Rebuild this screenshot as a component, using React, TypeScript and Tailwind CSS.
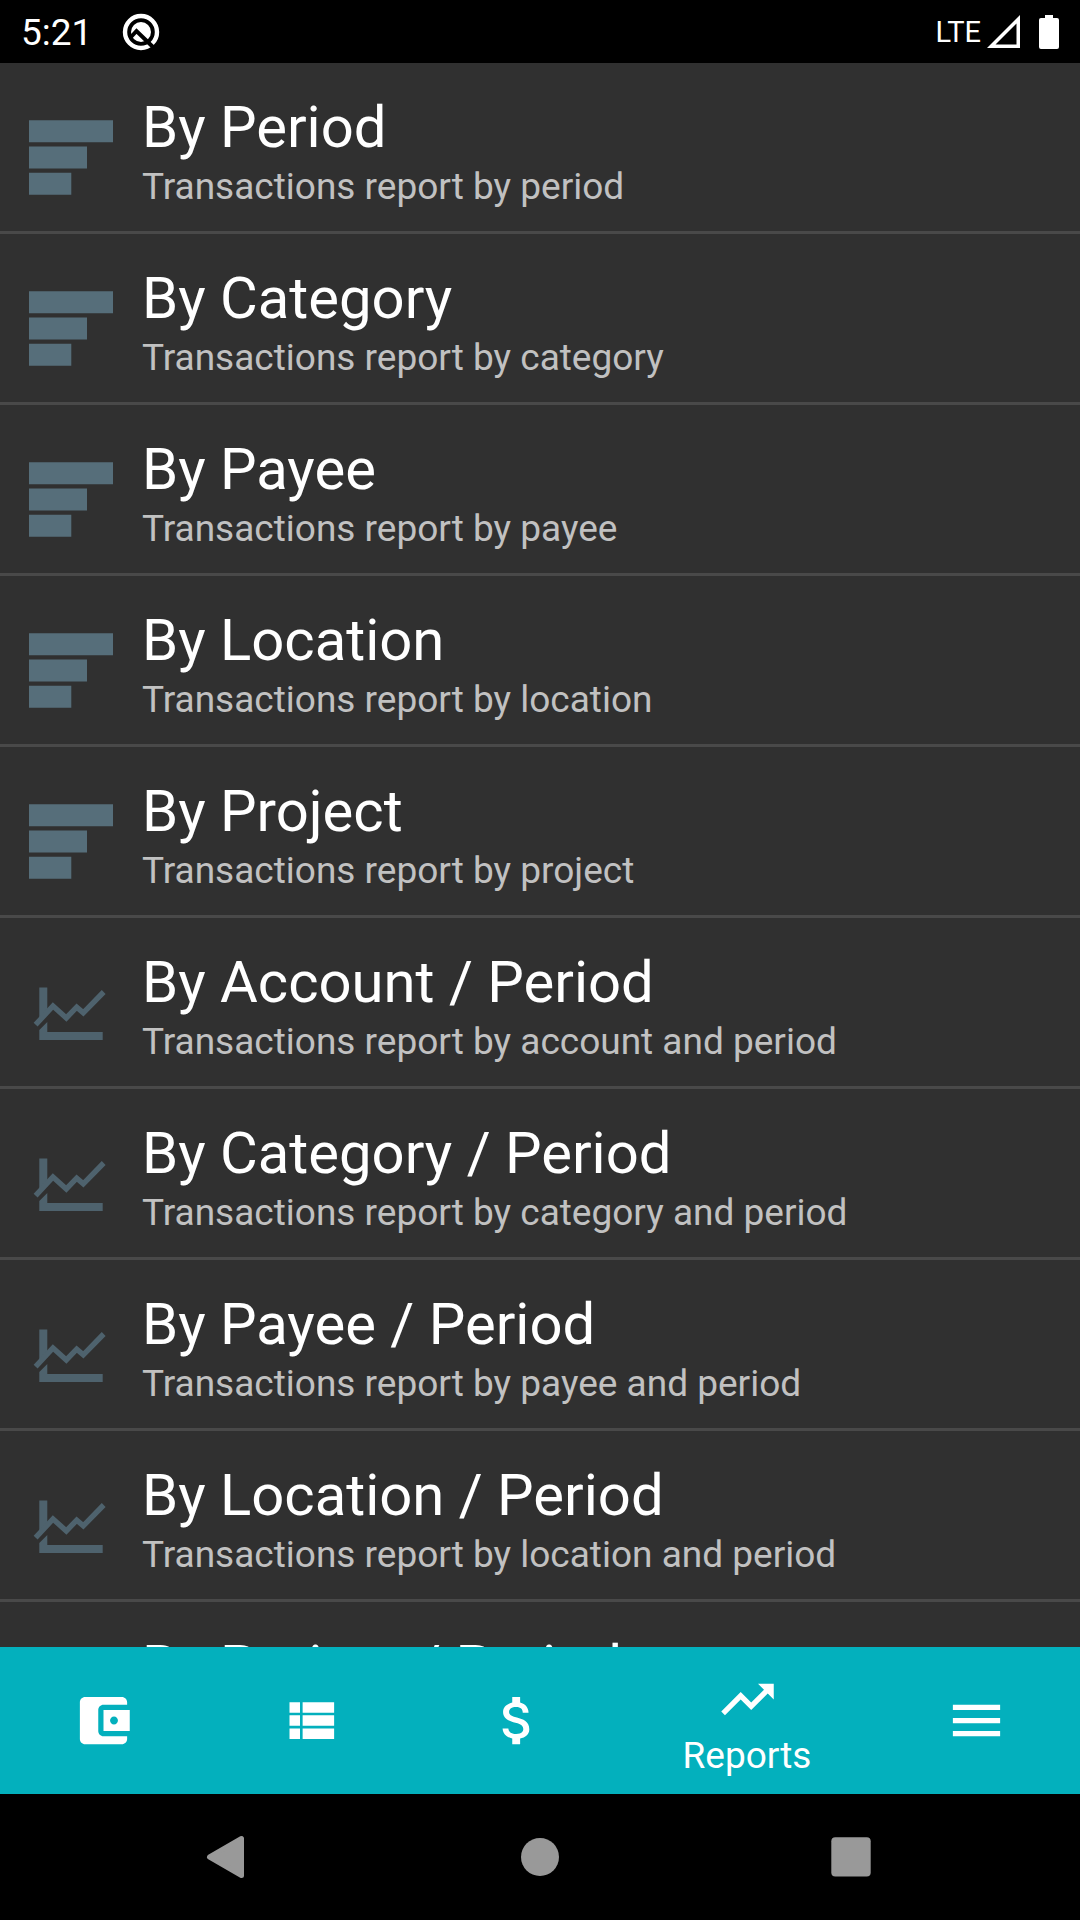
import React from "react";

type IconKind = "bars" | "line";

const reports: { title: string; summary: string; icon: IconKind }[] = [
  { title: "By Period", summary: "Transactions report by period", icon: "bars" },
  { title: "By Category", summary: "Transactions report by category", icon: "bars" },
  { title: "By Payee", summary: "Transactions report by payee", icon: "bars" },
  { title: "By Location", summary: "Transactions report by location", icon: "bars" },
  { title: "By Project", summary: "Transactions report by project", icon: "bars" },
  { title: "By Account / Period", summary: "Transactions report by account and period", icon: "line" },
  { title: "By Category / Period", summary: "Transactions report by category and period", icon: "line" },
  { title: "By Payee / Period", summary: "Transactions report by payee and period", icon: "line" },
  { title: "By Location / Period", summary: "Transactions report by location and period", icon: "line" },
  { title: "By Project / Period", summary: "Transactions report by project and period", icon: "line" },
];

function ReportIcon({ kind }: { kind: IconKind }) {
  return (
    <svg viewBox="0 0 84 84" className="size-[84px] shrink-0" aria-hidden="true">
      {kind === "bars" ? (
        <path fill="#566e7a" d="M0 5.3h84v22H0zM0 31.5h58v22H0zM0 57.7h42.3v22H0z" />
      ) : (
        <g fill="#4e626d">
          <path d="M10.3 17.5h8V43l-8 8zM10.3 60l8-8v10h55.4v8H10.3z" />
          <path
            d="M6.6 54.7 24 36 37.3 47.9 47.7 37.2l6.6 5.6L74.7 22"
            fill="none"
            stroke="#4e626d"
            strokeWidth="5.4"
          />
        </g>
      )}
    </svg>
  );
}

function StatusBar() {
  return (
    <header className="flex h-[63px] shrink-0 items-center bg-black px-[21px]">
      <time className="pt-[2px] text-[37px] leading-[43px]">5:21</time>
      <svg viewBox="0 0 38 38" className="ml-[30px] size-[38px]" aria-hidden="true">
        <circle cx="19" cy="19" r="16" fill="none" stroke="#fff" strokeWidth="4.4" />
        <circle cx="19" cy="19" r="10" fill="#fff" />
        <path d="M9 24 14.5 18 31 34" fill="none" stroke="#000" strokeWidth="4" />
      </svg>
      <span className="ml-auto text-[29px] leading-[36px]">LTE</span>
      <svg viewBox="0 0 33 34" className="ml-[6px] h-[34px] w-[33px]" aria-hidden="true">
        <path fill="#fff" fillRule="evenodd" d="M33 0v33H0zM29.5 8.5 8.5 29.5h21z" />
      </svg>
      <svg viewBox="0 0 20 34" className="ml-[19px] h-[34px] w-[20px]" aria-hidden="true">
        <path fill="#fff" d="M6 0h8v3h4q2 0 2 2v27q0 2-2 2H2q-2 0-2-2V5q0-2 2-2h4z" />
      </svg>
    </header>
  );
}

const tabs = [
  {
    label: "Accounts",
    path: "M21 18v1c0 1.100-.9 2-2 2H5c-1.110 0-2-.9-2-2V5c0-1.100.89-2 2-2h14c1.100 0 2 .9 2 2v1h-9c-1.110 0-2 .9-2 2v8c0 1.100.89 2 2 2h9zm-9-2h10V8H12v8zm4-2.500c-.83 0-1.500-.67-1.500-1.500s.67-1.500 1.500-1.500 1.500.67 1.500 1.500-.67 1.500-1.500 1.500z",
  },
  {
    label: "Transactions",
    path: "M4 14h4v-4H4v4zm0 5h4v-4H4v4zM4 9h4V5H4v4zm5 5h12v-4H9v4zm0 5h12v-4H9v4zM9 5v4h12V5H9z",
  },
  {
    label: "Budgets",
    path: "M11.800 10.900c-2.270-.59-3-1.200-3-2.150 0-1.090 1.010-1.850 2.700-1.850 1.780 0 2.440.85 2.500 2.100h2.210c-.07-1.720-1.120-3.300-3.210-3.810V3h-3v2.160c-1.940.42-3.500 1.680-3.500 3.610 0 2.310 1.910 3.460 4.700 4.130 2.500.6 3 1.480 3 2.410 0 .69-.49 1.790-2.700 1.790-2.060 0-2.870-.92-2.980-2.100h-2.200c.12 2.190 1.760 3.420 3.680 3.830V21h3v-2.150c1.950-.37 3.500-1.500 3.500-3.550 0-2.840-2.430-3.810-4.700-4.400z",
  },
  {
    label: "Reports",
    active: true,
    path: "M16 6l2.290 2.290-4.880 4.880-4-4L2 16.590 3.410 18l6-6 4 4 6.300-6.290L22 12V6z",
  },
  { label: "Menu", path: "M3 18h18v-2H3v2zm0-5h18v-2H3v2zm0-7v2h18V6H3z" },
];

function BottomTabs() {
  return (
    <nav className="flex h-[147px] shrink-0 bg-[#03b0bd]">
      {tabs.map((tab) => (
        <button
          key={tab.label}
          type="button"
          aria-label={tab.label}
          aria-current={tab.active ? "page" : undefined}
          className={
            tab.active
              ? "flex w-[252px] flex-col items-center gap-[3px] pt-[21px]"
              : "flex flex-1 items-center justify-center"
          }
        >
          <svg viewBox="0 0 24 24" className="size-[63px]" fill="#fff" aria-hidden="true">
            <path d={tab.path} />
          </svg>
          {tab.active && <span className="text-[37px] leading-[43px]">{tab.label}</span>}
        </button>
      ))}
    </nav>
  );
}

function SystemNav() {
  return (
    <nav className="flex h-[126px] shrink-0 items-center justify-center gap-[248px] bg-black">
      <button type="button" aria-label="Back">
        <svg viewBox="0 0 64 64" className="size-16" aria-hidden="true">
          <path
            fill="#999"
            stroke="#999"
            strokeWidth="5"
            strokeLinejoin="round"
            d="M13.500 32 45.500 13.500v37z"
          />
        </svg>
      </button>
      <button type="button" aria-label="Home">
        <svg viewBox="0 0 64 64" className="size-16" aria-hidden="true">
          <circle cx="32" cy="32" r="19" fill="#999" />
        </svg>
      </button>
      <button type="button" aria-label="Recent apps">
        <svg viewBox="0 0 64 64" className="size-16" aria-hidden="true">
          <rect x="11.300" y="12.200" width="39.400" height="39.400" rx="4" fill="#999" />
        </svg>
      </button>
    </nav>
  );
}

export default function App() {
  return (
    <div className="flex h-screen flex-col overflow-hidden bg-[#303030] font-['Roboto',sans-serif] text-white">
      <StatusBar />
      <main className="min-h-0 flex-1 overflow-hidden">
        <ul>
          {reports.map((report) => (
            <li key={report.title} className="border-b-[3px] border-[#494949]">
              <button type="button" className="flex h-[168px] w-full items-start pl-[29px] text-left">
                <span className="mt-[52px]">
                  <ReportIcon kind={report.icon} />
                </span>
                <span className="mt-[30px] ml-[29px] flex flex-col gap-1">
                  <span className="text-[58px] leading-[68px]">{report.title}</span>
                  <span className="text-[37px] leading-[43px] text-[#c1c1c1]">{report.summary}</span>
                </span>
              </button>
            </li>
          ))}
        </ul>
      </main>
      <BottomTabs />
      <SystemNav />
    </div>
  );
}
